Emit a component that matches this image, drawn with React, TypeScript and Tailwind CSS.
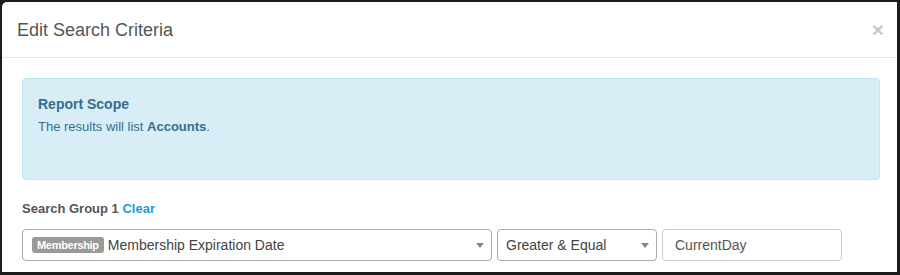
export default function App() {
  return (
    <div className="h-[275px] w-[900px] overflow-hidden bg-[#1c1c1c] pb-[3px] pl-[2px] pr-[3px] pt-[2px] font-['Liberation_Sans',Arial,sans-serif]">
      <div className="h-full overflow-hidden rounded-tl-[5px] bg-white">
        {/* Header */}
        <div className="flex h-[56px] items-center justify-between border-b border-[#e5e5e5] pl-[15px] pr-[13px]">
          <h4 className="text-[18px] leading-[20px] text-[#555]">Edit Search Criteria</h4>
          <span className="text-[21px] font-bold leading-none text-[#c8c8c8]">×</span>
        </div>

        {/* Body */}
        <div className="pl-[20px] pr-[17px] pt-[20px]">
          <div className="h-[102px] rounded-[4px] border border-[#bce8f1] bg-[#d9edf7] px-[15px] pt-[15px] text-[#31708f]">
            <div className="text-[14px] font-bold leading-[20px]">Report Scope</div>
            <div className="mt-[4px] text-[13px] leading-[18px]">
              The results will list <b>Accounts</b>.
            </div>
          </div>

          <div className="mt-[20px] text-[13px] font-bold leading-[17px] text-[#555]">
            Search Group 1 <span className="text-[#1a9bd7]">Clear</span>
          </div>

          <div className="mt-[12px] flex gap-[5px]">
            <div className="flex h-[32px] w-[470px] items-center rounded-[4px] border border-[#aaa] pl-[9px] pr-[6px]">
              <span className="rounded-[3px] bg-[#999] px-[5px] py-[2px] text-[11px] font-bold leading-[12px] tracking-[-0.3px] text-white">
                Membership
              </span>
              <span className="ml-[4px] flex-1 text-[14px] text-[#444]">Membership Expiration Date</span>
              <span className="mr-[1px] h-0 w-0 border-x-[4px] border-t-[5px] border-x-transparent border-t-[#888]" />
            </div>
            <div className="flex h-[32px] w-[160px] items-center rounded-[4px] border border-[#aaa] pl-[8px] pr-[7px]">
              <span className="flex-1 text-[14px] text-[#444]">Greater &amp; Equal</span>
              <span className="h-0 w-0 border-x-[4px] border-t-[5px] border-x-transparent border-t-[#888]" />
            </div>
            <div className="flex h-[32px] w-[180px] items-center rounded-[4px] border border-[#ccc] pl-[12px]">
              <span className="text-[14px] text-[#555]">CurrentDay</span>
            </div>
          </div>
        </div>
      </div>
    </div>
  );
}
